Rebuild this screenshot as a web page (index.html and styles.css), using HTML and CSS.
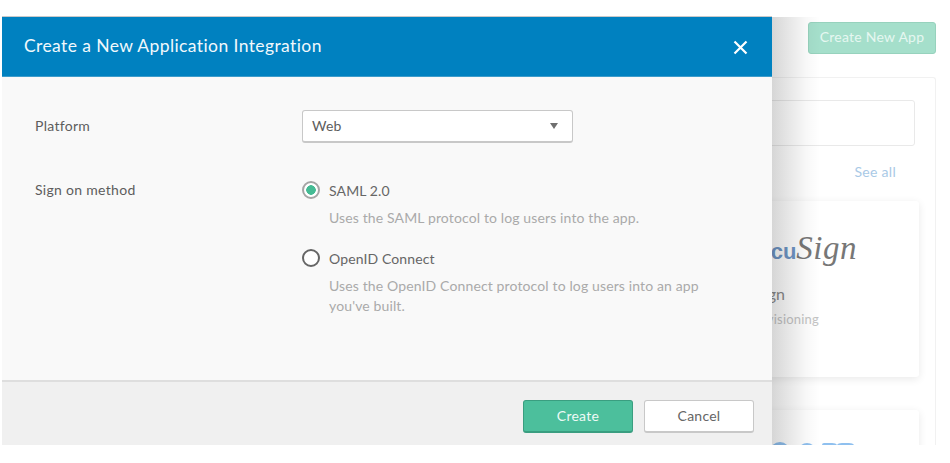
FILE: index.html
```html
<!DOCTYPE html>
<html lang="en">
<head>
<meta charset="utf-8">
<title>Create a New Application Integration</title>
<link rel="stylesheet" href="styles.css">
</head>
<body>
<div class="stage">
  <div class="page">
    <div class="page-top"><button class="new-app">Create New App</button></div>
    <div class="panel">
      <div class="search"></div>
      <div class="see-all-row"><a class="see-all">See all</a></div>
      <div class="card card-main">
        <div class="logo"><span class="logo-do">Do</span><span class="logo-cu">cu</span><span class="logo-sign">Sign</span></div>
        <div class="card-title">DocuSign</div>
        <div class="card-sub">Provisioning</div>
      </div>
      <div class="card card-next">
        <svg class="next-logo" width="90" height="12" viewBox="0 0 90 12"><g fill="#8fc0ef"><circle cx="7" cy="11" r="10"/><circle cx="34" cy="11" r="9"/><path d="M49 12V4q0-2 2-2h8q4 0 5 2 1-2 5-2h7q6 0 6 5v5z"/></g></svg>
      </div>
    </div>
  </div>
  <div class="fade"></div>
  <section class="modal">
    <header class="modal-head">
      <h1 class="modal-title">Create a New Application Integration</h1>
      <svg class="close" width="15" height="15" viewBox="0 0 15 15"><path d="M1.5 1.5l12 12M13.5 1.5l-12 12" stroke="#fff" stroke-width="2.2" fill="none"/></svg>
    </header>
    <div class="modal-body">
      <div class="row row-platform">
        <div class="label">Platform</div>
        <div class="control">
          <div class="select"><span>Web</span><i class="caret"></i></div>
        </div>
      </div>
      <div class="row">
        <div class="label">Sign on method</div>
        <div class="control">
          <div class="option">
            <div class="option-line"><span class="radio radio-on"></span><span class="option-name">SAML 2.0</span></div>
            <p class="option-desc">Uses the SAML protocol to log users into the app.</p>
          </div>
          <div class="option">
            <div class="option-line"><span class="radio"></span><span class="option-name">OpenID Connect</span></div>
            <p class="option-desc">Uses the OpenID Connect protocol to log users into an app<br>you've built.</p>
          </div>
        </div>
      </div>
    </div>
    <footer class="modal-foot">
      <button class="btn btn-primary">Create</button>
      <button class="btn">Cancel</button>
    </footer>
  </section>
</div>
</body>
</html>
```
FILE: styles.css
```css
* { box-sizing: border-box; }
html, body { margin: 0; padding: 0; background: #fff; }
body { font-family: Lato, "Open Sans", sans-serif; }
.stage { position: relative; width: 950px; height: 463px; overflow: hidden; background: #fff; }

/* page behind the modal */
.page { height: 445px; overflow: hidden; display: flex; flex-direction: column; align-items: flex-end; padding: 22px 14px 0 0; }
.page-top { height: 55px; flex: none; }
.new-app { width: 128px; height: 32px; padding: 0 0 3px; background: #a5dfcb; border: 1px solid #97d2bd; border-radius: 3px; color: #e6f7f1; font: 14px Lato, sans-serif; letter-spacing: .25px; }
.panel { width: 600px; flex: none; height: 368px; overflow: hidden; border: 1px solid #f1f1f1; border-bottom: 0; border-radius: 3px 3px 0 0; padding: 22px 20px 0 0; display: flex; flex-direction: column; align-items: flex-end; }
.search { width: 500px; height: 46px; flex: none; border: 1px solid #e9e9e9; border-radius: 3px; background: #fff; }
.see-all-row { height: 55px; flex: none; padding: 15px 19px 0 0; }
.see-all { color: #a9c9e6; font-size: 14px; letter-spacing: .3px; }
.card { width: 500px; flex: none; margin-right: -4px; border-radius: 3px; background: #fff; box-shadow: 0 2px 8px rgba(0,0,0,.09); display: flex; flex-direction: column; align-items: flex-end; }
.card-main { height: 176px; padding: 29px 62px 0 0; }
.logo { height: 44px; display: flex; align-items: baseline; }
.logo-do, .logo-cu { font: bold 22px "Liberation Sans", sans-serif; color: #6f96c6; }
.logo-sign { font: italic 33px "Liberation Serif", serif; color: #777; letter-spacing: .5px; }
.card-title { align-self: flex-end; margin: 10px 72px 0 0; font-size: 16px; color: #8b8b8b; }
.card-sub { margin: 8px 38px 0 0; font-size: 13px; color: #c4c4c4; letter-spacing: .2px; }
.card-next { height: 60px; margin-top: 33px; padding: 31px 56px 0 0; }
.next-logo { display: block; }

/* fading shadow cast by the modal */
.fade { position: absolute; left: 772px; top: 17px; width: 48px; height: 428px; background: linear-gradient(to right, rgba(0,0,0,.16), rgba(0,0,0,.03) 70%, rgba(0,0,0,0)); }

/* modal */
.modal { position: absolute; left: 2px; top: 16px; width: 770px; height: 429px; display: flex; flex-direction: column; background: #f9f9f9; border-top: 1px solid #c9c9c9; }
.modal-head { height: 60px; flex: none; display: flex; align-items: center; justify-content: space-between; padding: 0 24px 0 22px; background: #0081c0; border-bottom: 1px solid #3d9ccb; }
.modal-title { margin: 0 0 2px; font-size: 17.5px; font-weight: 400; color: #f0f8fc; letter-spacing: .4px; }
.close { display: block; margin-top: 2px; }
.modal-body { flex: 1; padding: 33px 0 0 33px; }
.row { display: grid; grid-template-columns: 267px 1fr; }
.row-platform { height: 64px; }
.label { font-size: 14px; color: #5d5d5d; letter-spacing: .3px; line-height: 32px; }
.select { width: 271px; height: 33px; padding: 0 14px 2px 9px; display: flex; align-items: center; justify-content: space-between; background: #fff; border: 1px solid #c8c8c8; border-bottom-width: 2px; border-radius: 3px; font-size: 14px; color: #5d5d5d; letter-spacing: .2px; }
.caret { width: 0; height: 0; margin-top: 2px; border: 4px solid transparent; border-top: 6px solid #6f6f6f; border-bottom: 0; }
.option { margin-bottom: 14px; }
.option-line { height: 32px; display: flex; align-items: center; gap: 9px; }
.radio { width: 18px; height: 18px; flex: none; border-radius: 50%; border: 2px solid #666; background: #fff; }
.radio-on { border-color: #a5a5a5; background: radial-gradient(circle, #45bb94 0 4.5px, #fff 5px); }
.option-name { font-size: 14px; color: #666; letter-spacing: .12px; }
.option-desc { margin: 2px 0 0; padding-left: 27px; font-size: 14px; line-height: 20px; color: #aaa; letter-spacing: .13px; }

.modal-foot { height: 65px; flex: none; display: flex; justify-content: flex-end; align-items: flex-start; gap: 11px; padding: 18px 18px 0 0; background: #f0f0f0; border-top: 2px solid #dedede; }
.btn { width: 110px; height: 33px; padding: 0 0 2px; background: #fff; border: 1px solid #c8c8c8; border-bottom-width: 2px; border-radius: 3px; font: 14px Lato, sans-serif; color: #666; letter-spacing: .25px; }
.btn-primary { background: #4cbf9c; border-color: #3a9e80; color: #eefaf6; }
```
